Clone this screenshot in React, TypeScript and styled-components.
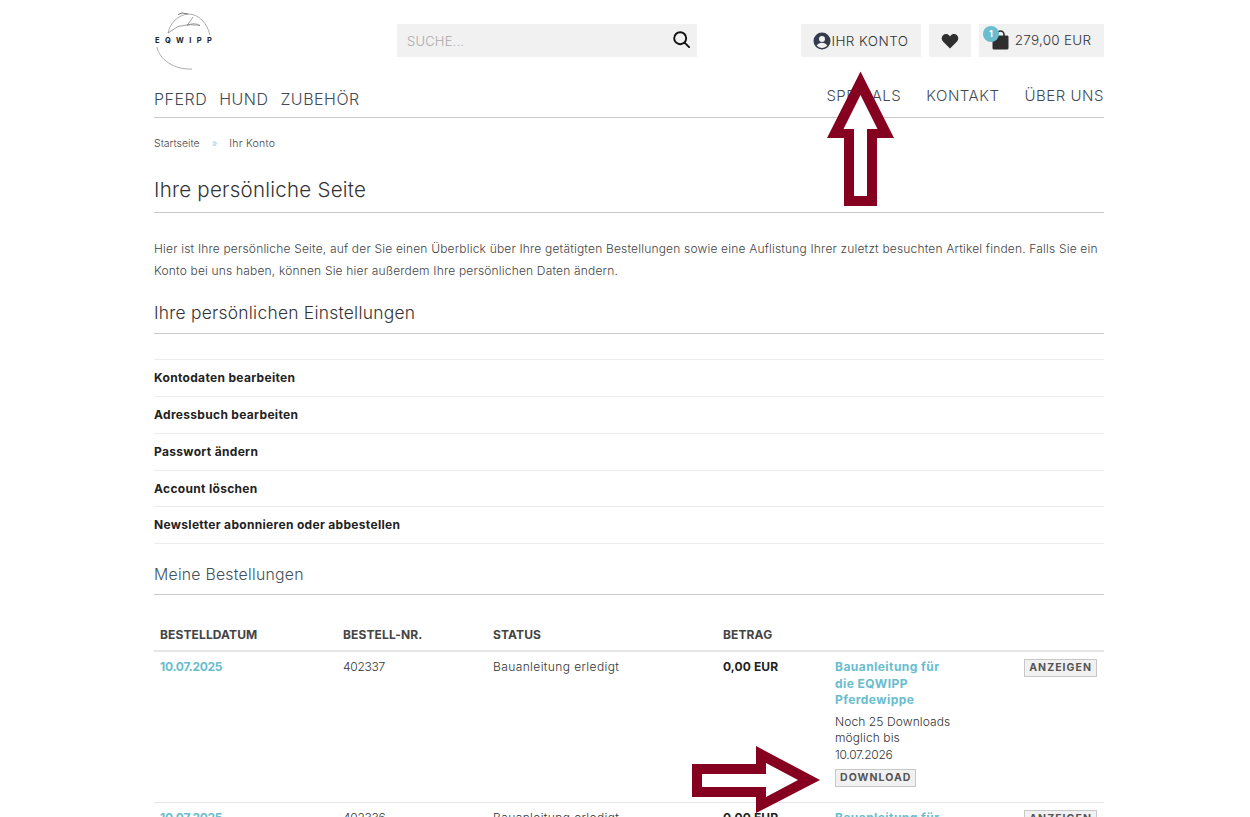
import React from "react";
import styled, { createGlobalStyle } from "styled-components";

const Global = createGlobalStyle`
  html, body { margin: 0; padding: 0; height: 817px; overflow: hidden; background: #fff; }
  body { font-family: Inter, "Noto Sans", sans-serif; color: #444; }
`;
const Page = styled.div`
  position: relative; width: 950px; height: 817px; margin-left: 154px; overflow: hidden;
`;
const Header = styled.header`display: flex; align-items: flex-start; height: 82px;`;
const Logo = styled.div`position: relative; width: 60px; height: 60px; margin-top: 11px; flex: none;`;
const LogoArt = styled.svg`display: block; width: 60px; height: 60px; overflow: visible;`;
const LogoText = styled.span`
  position: absolute; left: 1px; top: 24px; font-size: 7.5px; font-weight: 700; line-height: 12px;
  letter-spacing: 5.4px; color: #222; white-space: nowrap;
`;
const Search = styled.div`
  display: flex; align-items: center; justify-content: space-between; width: 300px; height: 33px;
  margin: 24px 0 0 183px; padding: 0 7px 2px 10px; box-sizing: border-box; background: #f1f1f1;
`;
const Placeholder = styled.span`margin-top: 2px; font-size: 13px; font-weight: 300; color: #aaa; letter-spacing: .2px;`;
const Actions = styled.div`display: flex; gap: 8px; margin: 24px 0 0 auto;`;
const ActionBox = styled.div<{ $w: number }>`
  position: relative; display: flex; align-items: center; justify-content: center; gap: 0;
  width: ${p => p.$w}px; height: 33px; background: #f1f1f1; font-size: 13.5px; font-weight: 300; color: #333;
`;
const Badge = styled.span`
  position: absolute; left: 4px; top: 2px; width: 16px; height: 16px; border-radius: 50%; background: #69bdcd;
  color: #fff; font-size: 9px; font-weight: 700; line-height: 16px; text-align: center;
`;
const BagIcon = styled.svg`margin-top: -1px;`;
const CartAmount = styled.span`margin-left: 6px; position: relative; top: -1px; letter-spacing: .27px;`;
const KontoLabel = styled.span`letter-spacing: .45px;`;
const NavBar = styled.nav`
  display: flex; justify-content: space-between; height: 35px; border-bottom: 1px solid #c8c8c8;
`;
const NavGroup = styled.div<{ $gap: number; $top: number }>`
  display: flex; gap: ${p => p.$gap}px; padding-top: ${p => p.$top}px;
`;
const NavLink = styled.span<{ $large?: boolean }>`
  font-size: ${p => (p.$large ? 16 : 15)}px; line-height: 20px; font-weight: 300; color: #3f4a55;
  letter-spacing: ${p => (p.$large ? 0.5 : 0.52)}px; white-space: nowrap;
`;
const Crumbs = styled.div`
  display: flex; gap: 12px; margin-top: 19px; height: 14px; font-size: 10.5px; line-height: 14px; font-weight: 300; color: #444;
`;
const CrumbCurrent = styled.span`letter-spacing: .25px;`;
const Sep = styled.span`color: #8fcbd6;`;
const Title = styled.h1`
  margin: 27px 0 0; padding-bottom: 10px; height: 24px; line-height: 24px; font-size: 20.5px; font-weight: 300; color: #333;
  letter-spacing: .25px; border-bottom: 1px solid #c8c8c8;
`;
const Intro = styled.p`
  margin: 25px 0 0; font-size: 12px; line-height: 22px; font-weight: 300; color: #444; letter-spacing: .18px; white-space: nowrap;
`;
const SubTitle = styled.h2<{ $mt: number; $pb: number; $muted?: boolean }>`
  margin: ${p => p.$mt}px 0 0; height: 22px; padding-bottom: ${p => p.$pb}px; line-height: 22px;
  font-size: ${p => (p.$muted ? 15.8 : 17.4)}px; font-weight: 300;
  color: ${p => (p.$muted ? "#44525a" : "#333")}; letter-spacing: .25px; border-bottom: 1px solid #c8c8c8;
`;
const LinkList = styled.ul`
  list-style: none; margin: 25px 0 0; padding: 0; border-top: 1px solid #ececec;
`;
const LinkRow = styled.li`
  height: 36px; line-height: 36px; border-bottom: 1px solid #ececec; font-size: 12px; font-weight: 700; color: #222; letter-spacing: .32px;
  &:nth-child(4) { height: 35px; line-height: 35px; }
`;
const OrderTable = styled.div`margin-top: 30px;`;
const HeadRow = styled.div`
  display: grid; grid-template-columns: 183px 150px 230px 112px 1fr; padding: 0 7px 0 6px; height: 25px;
  border-bottom: 2px solid #e6e6e6; font-size: 12px; line-height: 20px; font-weight: 700; color: #444; letter-spacing: .12px;
`;
const OrderRow = styled.div`
  display: grid; grid-template-columns: 183px 150px 230px 112px 1fr auto; padding: 7px 7px 0 6px; height: 143px;
  border-bottom: 1px solid #e6e6e6; font-size: 12px; line-height: 16.5px;
`;
const DateLink = styled.span`font-weight: 700; color: #69bdcd; letter-spacing: -.25px;`;
const Cell = styled.span<{ $numeric?: boolean }>`
  font-weight: 300; color: #333; letter-spacing: ${p => (p.$numeric ? -0.25 : 0.4)}px;
`;
const Amount = styled.span`font-weight: 700; color: #222; letter-spacing: .1px;`;
const DownloadCol = styled.div`display: flex; flex-direction: column; align-items: flex-start;`;
const ProductLink = styled.span`font-weight: 700; color: #69bdcd; letter-spacing: .45px;`;
const Note = styled.span`margin-top: 5px; font-weight: 300; color: #333; letter-spacing: .1px;`;
const NoteDate = styled.span`letter-spacing: -.25px;`;
const SmallButton = styled.span<{ $mt?: number }>`
  display: inline-block; box-sizing: border-box; margin-top: ${p => p.$mt ?? 0}px; padding: 0 4px; height: 18px; line-height: 16px;
  background: #f1f1f1; border: 1px solid #c8c8c8; font-size: 10.5px; font-weight: 700; letter-spacing: 1.05px; color: #555; white-space: nowrap;
`;
const Annotation = styled.svg<{ $l: number; $t: number }>`
  position: absolute; left: ${p => p.$l}px; top: ${p => p.$t}px; overflow: visible;
`;

const Product = () => (
  <ProductLink>Bauanleitung für<br />die EQWIPP<br />Pferdewippe</ProductLink>
);

export default function App() {
  return (
    <>
      <Global />
      <Page>
        <Header>
          <Logo>
            <LogoArt viewBox="0 0 60 60" fill="none">
              <path d="M3 36C5 48 20 59 38 58" stroke="#8a8a8a" strokeWidth=".7" />
              <path d="M14 22C16 12 24 4 34 3C45 3 53 12 56 24" stroke="#8a8a8a" strokeWidth=".7" />
              <path d="M14 22L24 15.500C30 14.500 36 13 40 14C43 14 45 14.500 46 14.500C43 12.500 38 12 33 14.500L39 6" stroke="#777" strokeWidth=".7" />
              <path d="M24 3.500l4-1.500 6 1" stroke="#555" strokeWidth=".8" />
            </LogoArt>
            <LogoText>EQWIPP</LogoText>
          </Logo>
          <Search>
            <Placeholder>SUCHE...</Placeholder>
            <svg width="17" height="17" viewBox="0 0 17 17" fill="none" stroke="#111" strokeWidth="1.900">
              <circle cx="7.200" cy="7.200" r="6" />
              <path d="M11.600 11.600l4.500 4.500" strokeLinecap="round" />
            </svg>
          </Search>
          <Actions>
            <ActionBox $w={120}>
              <svg width="18" height="18" viewBox="0 0 18 18">
                <circle cx="9" cy="9" r="8.500" fill="#333d4b" />
                <circle cx="9" cy="7" r="3" fill="#f1f1f1" />
                <path d="M3.800 13.500c1-2 3-2.800 5.200-2.800s4.200.8 5.200 2.800c-1.300 1.500-3.100 2.400-5.200 2.400s-3.900-.9-5.200-2.400z" fill="#f1f1f1" />
              </svg>
              <KontoLabel>IHR KONTO</KontoLabel>
            </ActionBox>
            <ActionBox $w={42}>
              <svg width="18" height="16" viewBox="0 0 18 16">
                <path d="M9 15.500L2 8.600C.2 6.800.3 3.800 2 2.200 3.800.500 6.500.7 8 2.300L9 3.400l1-1.100C11.500.7 14.200.500 16 2.200c1.700 1.600 1.800 4.600 0 6.400z" fill="#2e2e2e" />
              </svg>
            </ActionBox>
            <ActionBox $w={125}>
              <Badge>1</Badge>
              <BagIcon width="17" height="20" viewBox="0 0 17 20" fill="none">
                <path d="M5 6V4.500a3.500 3.500 0 0 1 7 0V6" stroke="#2e2e2e" strokeWidth="1.600" />
                <path d="M2 5.500h13c.8 0 1.500.6 1.500 1.400V18a1.500 1.500 0 0 1-1.500 1.500H2A1.500 1.500 0 0 1 .5 18V6.900c0-.8.7-1.400 1.500-1.400z" fill="#2e2e2e" />
              </BagIcon>
              <CartAmount>279,00 EUR</CartAmount>
            </ActionBox>
          </Actions>
        </Header>
        <NavBar>
          <NavGroup $gap={12} $top={7}>
            <NavLink $large>PFERD</NavLink>
            <NavLink $large>HUND</NavLink>
            <NavLink $large>ZUBEHÖR</NavLink>
          </NavGroup>
          <NavGroup $gap={25} $top={4}>
            <NavLink>SPECIALS</NavLink>
            <NavLink>KONTAKT</NavLink>
            <NavLink>ÜBER UNS</NavLink>
          </NavGroup>
        </NavBar>
        <Crumbs>
          <span>Startseite</span>
          <Sep>»</Sep>
          <CrumbCurrent>Ihr Konto</CrumbCurrent>
        </Crumbs>
        <Title>Ihre persönliche Seite</Title>
        <Intro>
          Hier ist Ihre persönliche Seite, auf der Sie einen Überblick über Ihre getätigten Bestellungen sowie eine Auflistung Ihrer zuletzt besuchten Artikel finden. Falls Sie ein<br />
          Konto bei uns haben, können Sie hier außerdem Ihre persönlichen Daten ändern.
        </Intro>
        <SubTitle $mt={20} $pb={9}>Ihre persönlichen Einstellungen</SubTitle>
        <LinkList>
          <LinkRow>Kontodaten bearbeiten</LinkRow>
          <LinkRow>Adressbuch bearbeiten</LinkRow>
          <LinkRow>Passwort ändern</LinkRow>
          <LinkRow>Account löschen</LinkRow>
          <LinkRow>Newsletter abonnieren oder abbestellen</LinkRow>
        </LinkList>
        <SubTitle $mt={20} $pb={8} $muted>Meine Bestellungen</SubTitle>
        <OrderTable>
          <HeadRow>
            <span>BESTELLDATUM</span>
            <span>BESTELL-NR.</span>
            <span>STATUS</span>
            <span>BETRAG</span>
          </HeadRow>
          <OrderRow>
            <DateLink>10.07.2025</DateLink>
            <Cell $numeric>402337</Cell>
            <Cell>Bauanleitung erledigt</Cell>
            <Amount>0,00 EUR</Amount>
            <DownloadCol>
              <Product />
              <Note>Noch 25 Downloads<br />möglich bis<br /><NoteDate>10.07.2026</NoteDate></Note>
              <SmallButton $mt={6}>DOWNLOAD</SmallButton>
            </DownloadCol>
            <div><SmallButton>ANZEIGEN</SmallButton></div>
          </OrderRow>
          <OrderRow>
            <DateLink>10.07.2025</DateLink>
            <Cell $numeric>402336</Cell>
            <Cell>Bauanleitung erledigt</Cell>
            <Amount>0,00 EUR</Amount>
            <DownloadCol><Product /></DownloadCol>
            <div><SmallButton>ANZEIGEN</SmallButton></div>
          </OrderRow>
        </OrderTable>
        <Annotation $l={673} $t={71} width="67" height="135" viewBox="0 0 67 135">
          <path d="M33.500 0.500L0 67h17v68h33V67h17z" fill="#86001f" />
          <path d="M33.500 24L16.500 58h10.500v67h13V58h10.500z" fill="#fff" />
        </Annotation>
        <Annotation $l={538} $t={746} width="129" height="67" viewBox="0 0 129 67">
          <path d="M128 34L64 0v18H0v33h64v16z" fill="#86001f" />
          <path d="M106 34L74 17v11H10v13h64v10z" fill="#fff" />
        </Annotation>
      </Page>
    </>
  );
}
